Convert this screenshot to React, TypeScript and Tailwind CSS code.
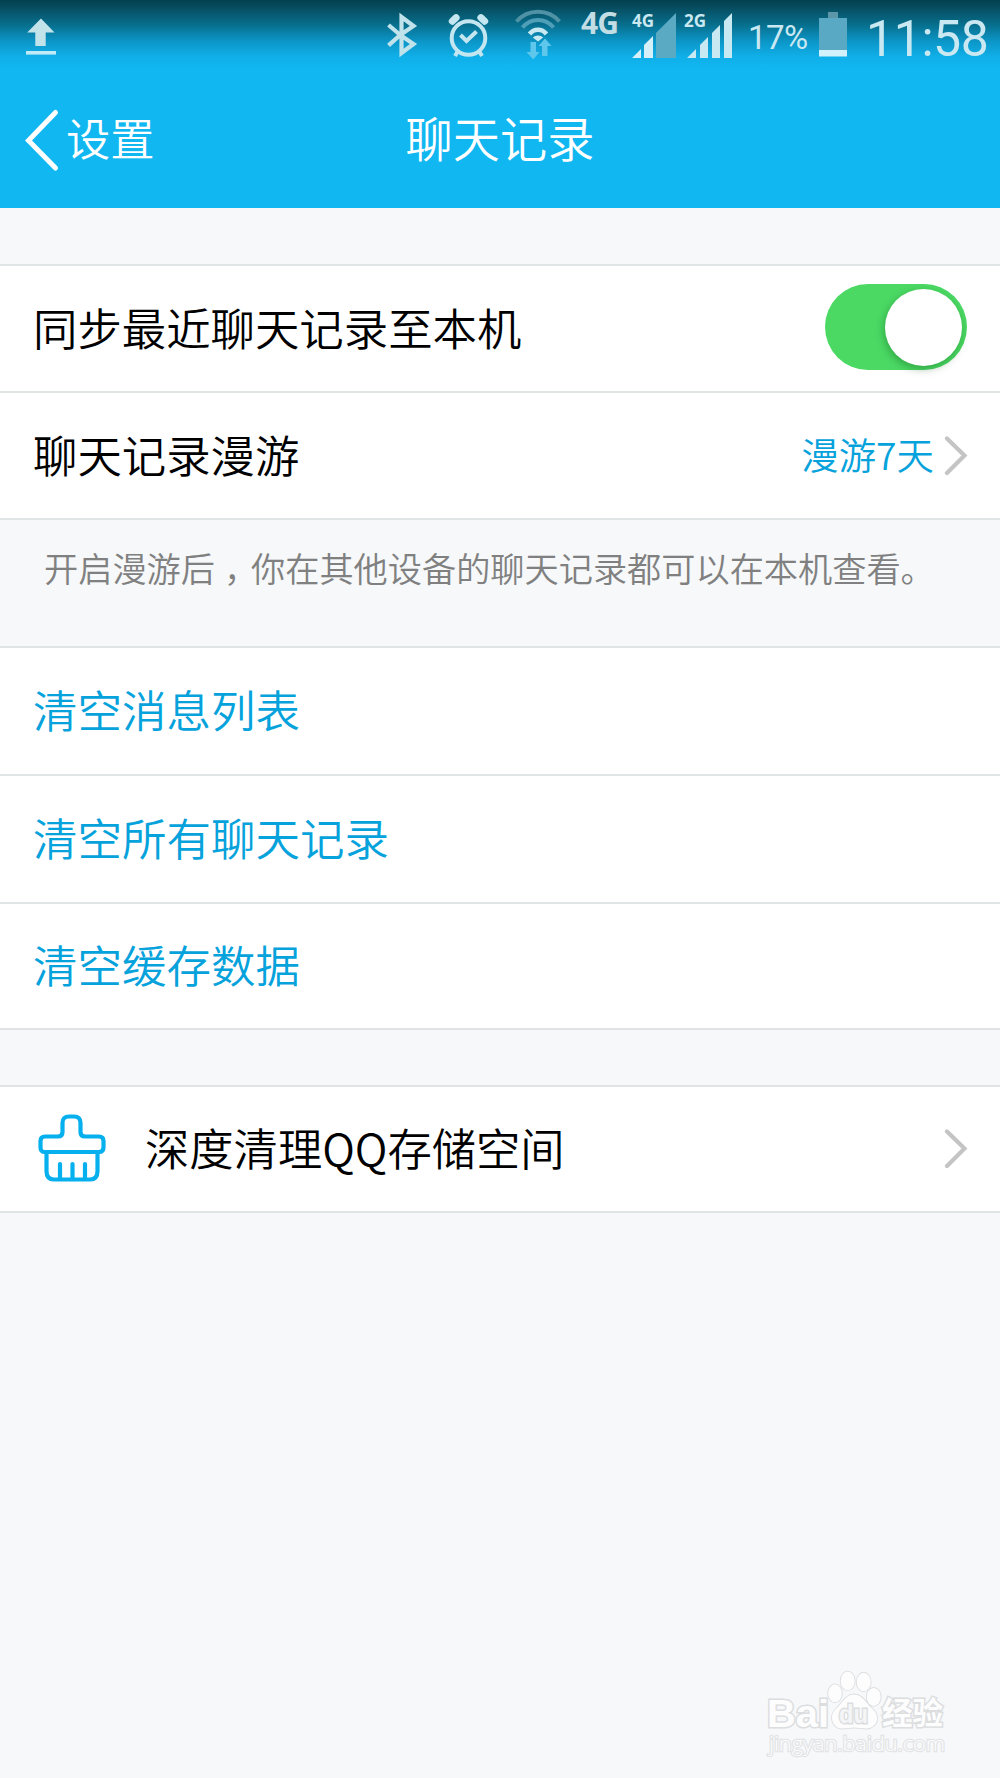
import React, { useState } from 'react'

const Chevron = () => (
  <svg className="w-[24px] h-[40px] shrink-0" viewBox="0 0 24 40" fill="none" stroke="#c4c4c4" strokeWidth="4.2">
    <path strokeLinecap="round" strokeLinejoin="miter" d="M3 2.5L20.5 19.5L3 37" />
  </svg>
)

const StatusBar = () => (
  <div className="flex items-start h-[70px] bg-[linear-gradient(to_bottom,#04414f_0%,#06495a_8%,#07708f_36%,#0c97c9_60%,#10b0ea_82%,#11b7f1_100%)] text-[#c9e8f1] whitespace-nowrap">
    {/* アップロード */}
    <svg className="w-[30px] h-[37px] ml-[26px] mt-[18px]" viewBox="0 0 30 37" fill="#c3e3ea">
      <path d="M15 0.5L28.5 14.5H19.7V28H9.3V14.5H1.2Z" />
      <rect x="0" y="33" width="30" height="3.6" fill="#bfeaf8" />
    </svg>

    {/* Bluetooth */}
    <svg className="w-[32px] h-[46px] ml-[331px] mt-[12px]" viewBox="0 0 32 46" fill="none" stroke="#c0e2eb" strokeWidth="4.2">
      <path d="M1.5 13L13.2 23L1.5 33.3M13.2 23L26.5 14L14.5 5V41L26.5 32L13.2 23" />
    </svg>

    {/* アラーム */}
    <svg className="w-[42px] h-[45px] ml-[29px] mt-[13px]" viewBox="0 0 42 45" fill="none" stroke="#c3e6f0">
      <circle cx="20.5" cy="25" r="16.8" strokeWidth="4" />
      <path strokeWidth="7" strokeLinecap="round" d="M4.3 8.2L8.1 4.6M36.7 8.2L32.9 4.6" />
      <path strokeWidth="4" d="M10 38L7 43M31 38L34 43" />
      <path strokeWidth="4" d="M12.5 22L18.5 28L28.5 18.5" />
    </svg>

    {/* Wi-Fi */}
    <svg className="w-[46px] h-[51px] ml-[25px] mt-[9px]" viewBox="0 0 46 51" fill="none">
      <path stroke="#4f91a5" strokeWidth="4" d="M1.5 12.5C13 -0.5 33 -0.5 44.5 12.5" />
      <path stroke="#4f9fb9" strokeWidth="4" d="M7.5 18.5C16 8.5 30 8.5 38.5 18.5" />
      <path stroke="#c9e9f2" strokeWidth="4.5" d="M14.5 25C19 19.3 27 19.3 31.5 25" />
      <path fill="#c9e9f2" d="M23 32.5L17.8 28.5C20.5 25.7 25.5 25.7 28.2 28.5Z" />
      <path fill="#5fc6ec" d="M15.5 33H21V43H24.5L18.3 50.5L11.5 43H15.5Z" />
      <path fill="#5fc6ec" d="M27 47V37H23.5L30 29.5L36.5 37H32.5V47Z" />
    </svg>

    <span className="w-[38px] ml-[20px] mt-[7px] font-['Open_Sans'] font-bold text-[30px] leading-[32px] tracking-[-0.8px] text-[#c3dde4]">4G</span>

    {/* SIM 1 */}
    <div className="relative w-[46px] h-[58px] ml-[12px]">
      <span className="absolute left-[1px] top-[11px] font-['Open_Sans'] font-bold text-[17px] leading-[20px]">4G</span>
      <svg className="w-full h-full" viewBox="0 0 46 58">
        <path fill="#d5f0f8" d="M1 58L10 49V58ZM13 45L22 36V58H13Z" />
        <path fill="#5aaac4" d="M25 33L45 13V58H25Z" />
      </svg>
    </div>

    {/* SIM 2 */}
    <div className="relative w-[50px] h-[58px] ml-[6px]">
      <span className="absolute left-[1px] top-[11px] font-['Open_Sans'] font-bold text-[17px] leading-[20px]">2G</span>
      <svg className="w-full h-full" viewBox="0 0 50 58" fill="#c9e9f2">
        <path d="M4 58L13 49V58ZM17 45L25 37V58H17ZM29 33L37 25V58H29ZM41 21L49 13V58H41Z" />
      </svg>
    </div>

    <span className="w-[62px] ml-[15px] mt-[18px] font-[Roboto] font-normal text-[33px] leading-[40px] tracking-[-0.5px]">17%</span>

    <svg className="w-[28px] h-[45px] ml-[9px] mt-[12px]" viewBox="0 0 28 45">
      <path fill="#5b97a9" d="M9 0H19V6H9Z" />
      <rect y="6" width="28" height="33" fill="#5aa9c4" />
      <rect y="38" width="28" height="6.5" fill="#d3f1fa" />
    </svg>

    <span className="ml-[19px] mt-[9px] font-[Roboto] font-normal text-[50px] leading-[60px] tracking-[-0.4px]">11:58</span>
  </div>
)

const Header = () => (
  <div className="relative flex items-center h-[138px] text-white">
    <svg className="w-[36px] h-[66px] ml-[24px] mt-[2px]" viewBox="0 0 36 66" fill="none" stroke="white" strokeWidth="5">
      <path strokeLinecap="round" d="M31.5 5.5L4.5 33.5L31.5 61" />
    </svg>
    <span className="ml-[6px] mb-[4px] text-[44.3px] leading-[60px]">设置</span>
    <h1 className="absolute inset-x-0 top-[37px] text-center text-[47.2px] leading-[60px] font-[350]">聊天记录</h1>
  </div>
)

const PawLogo = () => (
  <svg className="w-[190px] h-[92px]" viewBox="0 0 190 92" fill="#fdfdfe" stroke="#dcdddf" strokeWidth="1.8" paintOrder="stroke">
    <text x="5" y="56.5" fontFamily="Liberation Sans" fontWeight="700" fontSize="39" strokeWidth="3" textLength="62" lengthAdjust="spacingAndGlyphs">Bai</text>
    <ellipse cx="73" cy="23.3" rx="6.8" ry="9" />
    <ellipse cx="85.7" cy="10.9" rx="7" ry="9.3" />
    <ellipse cx="101.7" cy="12" rx="7" ry="9.3" />
    <ellipse cx="111.7" cy="26.9" rx="7" ry="9" />
    <path d="M92 24.5C99 24.5 103 30.5 107 35.5C112 40.5 115 42.5 115 48.5C115 54.5 110 58.5 104 58.5C99 58.5 96 57.5 92 57.5C88 57.5 85 58.5 80 58.5C74 58.5 70 53.5 70 47.5C70 41.5 74 39.5 78 34.5C82 29.5 86 24.5 92 24.5Z" />
    <text x="77" y="53" fontFamily="Liberation Sans" fontWeight="700" fontSize="25" fill="#f4f5f6" strokeWidth="3" textLength="29" lengthAdjust="spacingAndGlyphs">du</text>
    <text x="120" y="54" fontFamily="Noto Sans CJK SC" fontWeight="700" fontSize="30.5" strokeWidth="3">经验</text>
    <text x="7" y="80.5" fontFamily="Open Sans" fontSize="20" stroke="#e3e4e6" strokeWidth="2.4" textLength="176" lengthAdjust="spacingAndGlyphs">jingyan.baidu.com</text>
  </svg>
)

const App = () => {
  const [sync, setSync] = useState(true)

  const clearItems = [
    { label: '清空消息列表', height: 'h-[128px]' },
    { label: '清空所有聊天记录', height: 'h-[128px]' },
    { label: '清空缓存数据', height: 'h-[126px]' }
  ]

  return (
    <div className="relative w-[1000px] h-[1778px] overflow-hidden bg-[#f6f8fa] font-['Noto_Sans_CJK_SC',sans-serif] font-[350] text-black">
      <header className="h-[208px] bg-[#11b7f1]">
        <StatusBar />
        <Header />
      </header>

      {/* 同期とローミング */}
      <section className="mt-[56px] bg-white border-t-2 border-[#e1e4e4]">
        <div className="flex items-center justify-between h-[127px] pl-[33px] pr-[33px] border-b-2 border-[#e1e4e4]">
          <span className="mb-[4px] text-[44.4px] leading-[60px]">同步最近聊天记录至本机</span>
          <button
            onClick={() => setSync(!sync)}
            className={`flex items-center w-[142px] h-[86px] p-[5px] mb-[3px] rounded-full bg-[#4bd964] ${sync ? 'justify-end' : 'justify-start'}`}
          >
            <span className="w-[77px] h-[77px] rounded-full bg-white shadow-[-1px_3px_9px_rgba(0,70,10,0.35)]"></span>
          </button>
        </div>
        <div className="flex items-center h-[127px] pl-[33px] pr-[32px] border-b-2 border-[#e1e4e4]">
          <span className="mb-[3px] text-[44.4px] leading-[60px]">聊天记录漫游</span>
          <span className="ml-auto mb-[4px] mr-[10px] text-[37.4px] leading-[50px] text-[#06a2dc]">漫游7天</span>
          <Chevron />
        </div>
      </section>

      <p className="h-[126px] pt-[22px] pl-[44px] text-[34.2px] leading-[50px] text-[#808080] whitespace-nowrap">
        开启漫游后<span className="ml-[9px] mr-[10px] [font-feature-settings:'halt']">，</span>你在其他设备的聊天记录都可以在本机查看。
      </p>

      {/* 削除メニュー */}
      <section className="bg-white border-t-2 border-[#e1e4e4] text-[#06a2dc]">
        {clearItems.map((item) => (
          <div key={item.label} className={`flex items-center pl-[33px] border-b-2 border-[#e1e4e4] ${item.height}`}>
            <span className="mb-[5px] text-[44.5px] leading-[60px]">{item.label}</span>
          </div>
        ))}
      </section>

      <section className="flex items-center h-[128px] mt-[55px] pl-[38px] pr-[32px] bg-white border-y-2 border-[#e1e4e4]">
        <svg className="w-[68px] h-[68px] mb-[2px]" viewBox="0 0 68 68" fill="none" stroke="#06b0ef" strokeWidth="4.2" strokeLinecap="round">
          <path strokeLinejoin="round" d="M24.5 9Q24.5 2.5 31 2.5H36Q42.5 2.5 42.5 9V18Q42.5 22.5 47 22.5H61Q65.5 22.5 65.5 27V33.5Q65.5 38 61 38H7Q2.5 38 2.5 33.5V27Q2.5 22.5 7 22.5H20Q24.5 22.5 24.5 18Z" />
          <path d="M8.5 39V57Q8.5 65.5 16 65.5H52Q59.5 65.5 59.5 57V39M22 50V64M34.5 50V64M47 50V64" />
        </svg>
        <span className="ml-[39px] mb-[4px] text-[44.3px] leading-[60px]">深度清理QQ存储空间</span>
        <span className="ml-auto"><Chevron /></span>
      </section>

      <div className="absolute left-[762px] top-[1670px]">
        <PawLogo />
      </div>
    </div>
  )
}

export default App
